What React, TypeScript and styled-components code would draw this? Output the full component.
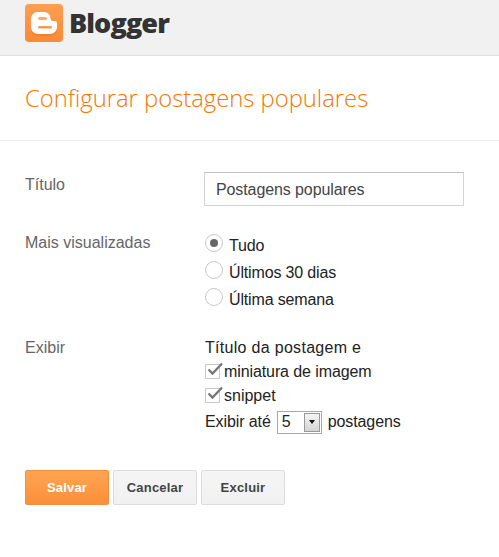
import React from "react";
import styled, { createGlobalStyle } from "styled-components";

const Global = createGlobalStyle`
  html, body { margin: 0; padding: 0; background: #fff; }
  body { font-family: "Liberation Sans", Arial, sans-serif; color: #222; width: 499px; height: 557px; overflow: hidden; }
`;
const Page = styled.div`width: 499px; height: 557px; overflow: hidden;`;
const Header = styled.header`
  height: 55px; background: #f1f1f1; border-bottom: 1px solid #e0e0e0;
  display: flex; align-items: center; padding: 0 25px; gap: 7px;
`;
const LogoMark = styled.svg`width: 38px; height: 38px; flex: none; margin-top: -9px;`;
const Brand = styled.div`
  font-family: "Open Sans", sans-serif; font-weight: 800; font-size: 27px; line-height: 38px;
  color: #333; letter-spacing: -0.9px; margin-top: -9px; margin-left: -1px;
`;
const TitleBar = styled.div`
  height: 84px; border-bottom: 1px solid #ebebeb; padding: 0 25px; display: flex; align-items: center;
`;
const Heading = styled.h1`
  margin: -1px 0 0; font-family: "Open Sans", sans-serif; font-weight: 300; font-size: 23.8px; color: #f57600; white-space: nowrap;
`;
const Form = styled.form`padding: 31px 35px 0 25px; display: flex; flex-direction: column;`;
const Row = styled.div<{ $gap: number }>`
  display: grid; grid-template-columns: 179px 1fr; margin-bottom: ${p => p.$gap}px;
`;
const Label = styled.div<{ $top: number }>`
  font-size: 16px; color: #666; line-height: 20px; padding-top: ${p => p.$top}px;
`;
const TextInput = styled.div`
  width: 260px; height: 34px; box-sizing: border-box; border: 1px solid #d4d4d4; border-top-color: #c0c0c0;
  display: flex; align-items: center; padding: 1px 0 0 11px; letter-spacing: -0.1px;
  font-size: 16px; color: #444;
`;
const Options = styled.div`display: flex; flex-direction: column;`;
const Opt = styled.div`display: flex; align-items: center; height: 27px; font-size: 16px; color: #222; letter-spacing: -0.15px;`;
const Radio = styled.span<{ $on?: boolean }>`
  width: 18px; height: 18px; border: 1px solid #c8c8c8; border-radius: 50%; flex: none; box-sizing: border-box;
  margin: -6px 6px 0 1px; position: relative; background: #fff;
  &::after { content: ""; display: ${p => (p.$on ? "block" : "none")}; position: absolute; left: 4px; top: 4px; width: 8px; height: 8px; border-radius: 50%; background: #666; }
`;
const Line = styled.div<{ $track?: number }>`
  display: flex; align-items: center; height: 24px; font-size: 16px; color: #222; padding-left: 1px;
  letter-spacing: ${p => p.$track ?? 0}px;
`;
const LastLine = styled(Line)`height: 28px;`;
const CheckBox = styled.span`
  width: 15px; height: 15px; border: 1px solid #c8c8c8; box-sizing: border-box; flex: none; position: relative; margin: -1px 4px 0 0; background: #fff;
`;
const Tick = styled.svg`position: absolute; left: 0; top: -4px; width: 17px; height: 16px; overflow: visible;`;
const Select = styled.div`
  width: 45px; height: 23px; box-sizing: border-box; border: 1px solid #a9a9a9; margin: 0 6px; display: flex; align-items: center; justify-content: space-between;
  padding: 1px 1px 1px 4px; font-size: 16px; color: #222;
`;
const Arrow = styled.span`
  width: 16px; height: 19px; box-sizing: border-box; border: 1px solid #999; background: linear-gradient(#f4f4f4, #d4d4d4); display: flex; align-items: center; justify-content: center;
  &::after { content: ""; border-left: 3.5px solid transparent; border-right: 3.5px solid transparent; border-top: 4px solid #111; }
`;
const Buttons = styled.div`display: flex; gap: 4px; margin-top: 34px;`;
const Button = styled.button<{ $primary?: boolean; $w: number }>`
  width: ${p => p.$w}px; height: 35px; padding: 0; border-radius: 2px; box-sizing: border-box;
  font-family: "Liberation Sans", Arial, sans-serif; font-weight: 700; font-size: 13px; letter-spacing: 0.2px;
  border: 1px solid ${p => (p.$primary ? "#f4903d" : "#dcdcdc")};
  color: ${p => (p.$primary ? "#fff" : "#444")};
  background: ${p => (p.$primary ? "linear-gradient(#ffa552, #fd8e3a)" : "linear-gradient(#f5f5f5, #f1f1f1)")};
`;

const Check = () => (
  <CheckBox>
    <Tick viewBox="0 0 17 16"><path d="M2.500 8.500 L6.500 12.500 L16 2.500" fill="none" stroke="#777" strokeWidth="2.300" /></Tick>
  </CheckBox>
);

export default function App() {
  return (
    <Page>
      <Global />
      <Header>
        <LogoMark viewBox="0 0 38 38">
          <defs>
            <linearGradient id="lg" x1="0" y1="0" x2="0" y2="1">
              <stop offset="0" stopColor="#fb9e52" /><stop offset="1" stopColor="#fd8a35" />
            </linearGradient>
          </defs>
          <rect width="38" height="38" rx="4" fill="url(#lg)" />
          <path fill="#ee8232" d="M13 10h6c4 0 6.500 3 6.500 6.500 0 1.500 1 2.500 2.500 2.500h2c1.200 0 2 .8 2 2v4c0 4-3 7-7 7H13c-4 0-7-3-7-7v-8c0-4 3-7 7-7z" />
          <path fill="#fff" d="M13 8h6c4 0 6.500 3 6.500 6.500 0 1.500 1 2.500 2.500 2.500h2c1.200 0 2 .8 2 2v4c0 4-3 7-7 7H13c-4 0-7-3-7-7v-8c0-4 3-7 7-7z" />
          <rect x="13" y="13" width="9" height="3" rx="1.500" fill="#fdac72" />
          <rect x="13" y="22" width="14" height="2.500" rx="1.200" fill="#fd9a4e" />
        </LogoMark>
        <Brand>Blogger</Brand>
      </Header>
      <TitleBar><Heading>Configurar postagens populares</Heading></TitleBar>
      <Form>
        <Row $gap={26}>
          <Label $top={3}>Título</Label>
          <TextInput>Postagens populares</TextInput>
        </Row>
        <Row $gap={23}>
          <Label $top={1}>Mais visualizadas</Label>
          <Options>
            <Opt><Radio $on />Tudo</Opt>
            <Opt><Radio />Últimos 30 dias</Opt>
            <Opt><Radio />Última semana</Opt>
          </Options>
        </Row>
        <Row $gap={0}>
          <Label $top={2}>Exibir</Label>
          <Options>
            <Line $track={0.3}>Título da postagem e</Line>
            <Line $track={-0.1}><Check />miniatura de imagem</Line>
            <Line><Check />snippet</Line>
            <LastLine $track={-0.1}>Exibir até<Select>5<Arrow /></Select>postagens</LastLine>
          </Options>
        </Row>
        <Buttons>
          <Button type="button" $primary $w={84}>Salvar</Button>
          <Button type="button" $w={84}>Cancelar</Button>
          <Button type="button" $w={84}>Excluir</Button>
        </Buttons>
      </Form>
    </Page>
  );
}
